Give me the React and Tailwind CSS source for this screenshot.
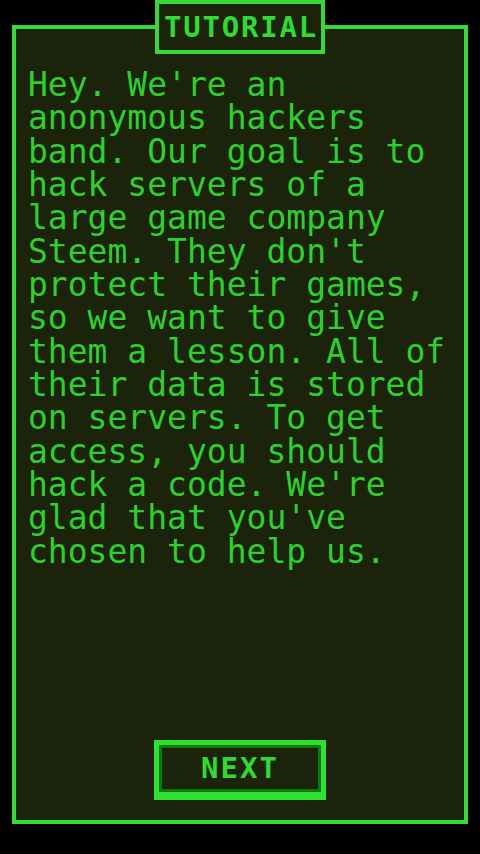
import React from "react";

const mono = { fontFamily: '"DejaVu Sans Mono", "Liberation Mono", monospace' };

export default function App() {
  return (
    <div className="w-[480px] h-[854px] bg-black pt-[25px] px-[12px]" style={mono}>
      <div className="relative h-[799px] border-4 border-[#36d936] bg-[#1b230a] flex flex-col">
        <div className="absolute -top-[29px] left-1/2 -translate-x-1/2 w-[170px] h-[54px] border-4 border-[#36d936] bg-[#1b230a] flex items-center justify-center">
          <span className="text-[29px] leading-none font-bold tracking-[1.8px] text-[#33d933] pl-[2px]">TUTORIAL</span>
        </div>

        <p className="pt-[39px] pl-[12px] max-w-[458px] text-[33px] leading-[33.35px] text-[#2fcf2f]">
          <span className="block max-w-[22ch]">
            Hey. We're an anonymous hackers band. Our goal is to hack servers of a large game company Steem. They don't protect their games, so we want to give them a lesson. All of their data is stored on servers. To get access, you should hack a code. We're glad that you've chosen to help us.
          </span>
        </p>

        <div className="flex-1" />

        <div className="flex justify-center mb-[20px]">
          <button
            type="button"
            className="w-[172px] h-[60px] border-[5px] border-b-[8px] border-[#2fe02f] bg-[#0f7a0f] p-[3px] flex"
          >
            <span className="flex-1 flex items-center justify-center bg-[#1b230a] text-[29px] leading-none font-bold tracking-[2px] text-[#33d933]">
              NEXT
            </span>
          </button>
        </div>
      </div>
    </div>
  );
}
